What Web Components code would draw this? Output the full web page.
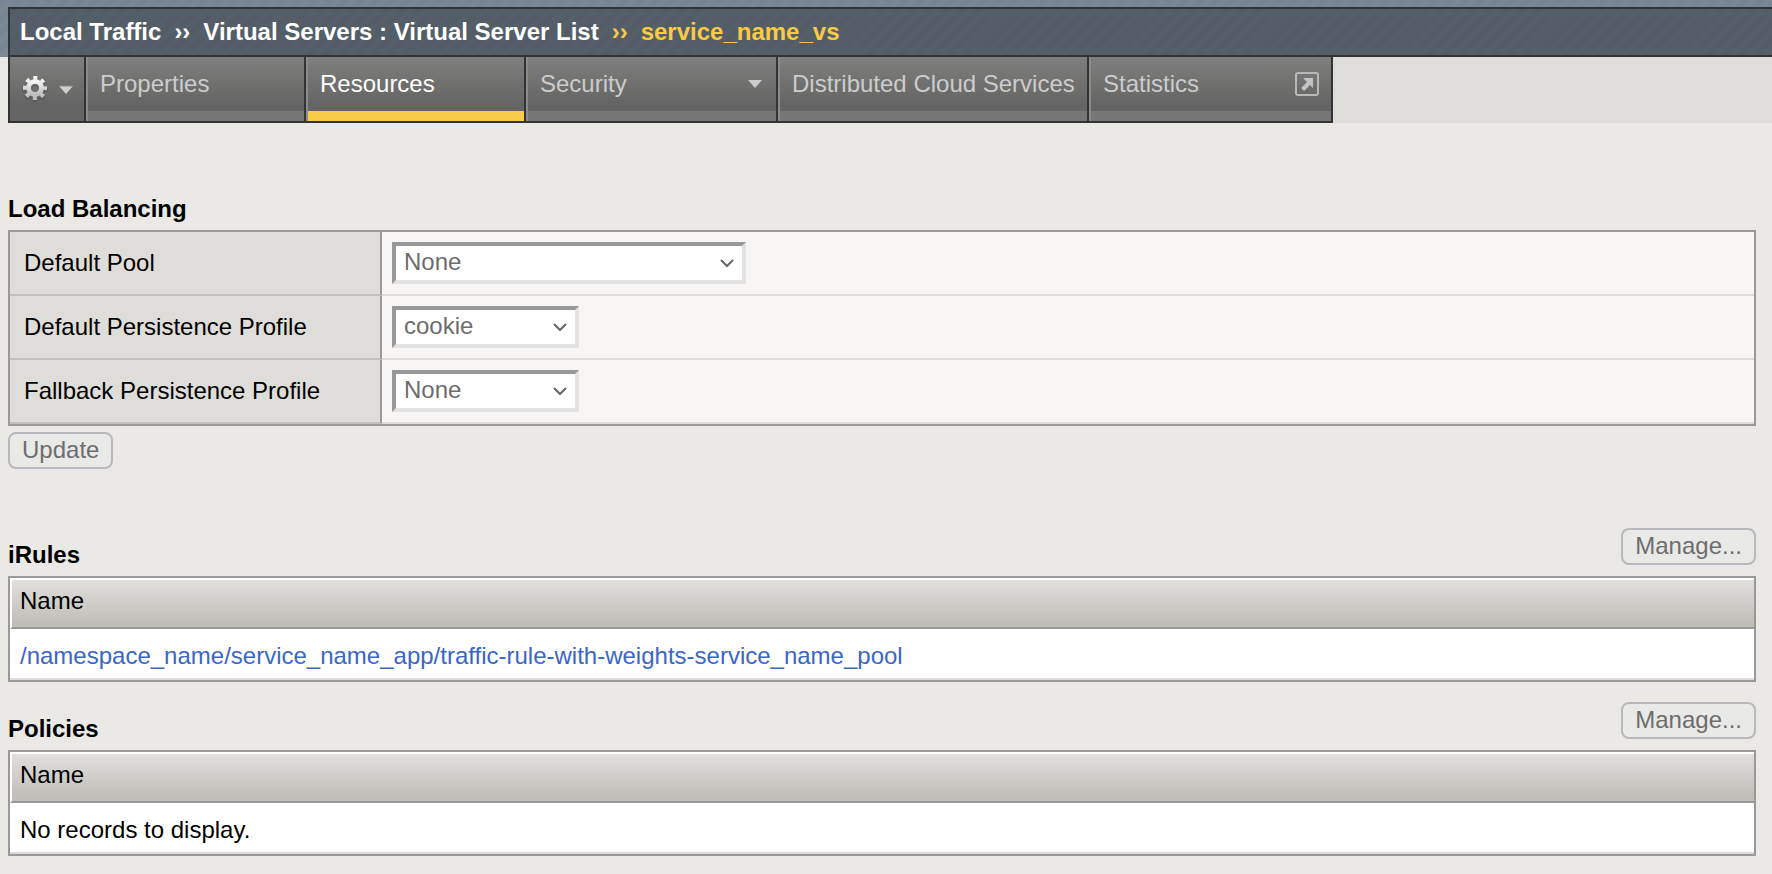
<!DOCTYPE html>
<html lang="en">
<head>
<meta charset="utf-8">
<title>Virtual Server List : service_name_vs</title>
<style>
  :root {
    --ink: #333335;
    --line: #999;
    --panel: #dfddd9;
    --accent: #f8cb46;
  }
  body {
    margin: 0;
    background: #eae9e5;
    color: #000;
    font: 24px/28px "Liberation Sans", Arial, Helvetica, sans-serif;
  }
</style>
</head>
<body>
<app-page>
  <crumb-bar slot="top">
    <crumb-item>Local Traffic</crumb-item>
    <crumb-item>Virtual Servers : Virtual Server List</crumb-item>
    <crumb-item current>service_name_vs</crumb-item>
  </crumb-bar>
  <tab-strip slot="tabs">
    <tab-menu></tab-menu>
    <nav-tab>Properties</nav-tab>
    <nav-tab active>Resources</nav-tab>
    <nav-tab size="medium" icon="arrow">Security</nav-tab>
    <nav-tab size="large">Distributed Cloud Services</nav-tab>
    <nav-tab size="medium" icon="popup">Statistics</nav-tab>
  </tab-strip>
  <load-balancing></load-balancing>
  <record-list heading="iRules"><a href="#rule">/namespace_name/service_name_app/traffic-rule-with-weights-service_name_pool</a></record-list>
  <record-list heading="Policies">No records to display.</record-list>
</app-page>

<script>
const define = (name, html, setup) => {
  const template = document.createElement('template');
  template.innerHTML = html;
  customElements.define(name, class extends HTMLElement {
    constructor() {
      super();
      this.attachShadow({ mode: 'open' }).append(template.content.cloneNode(true));
    }
    connectedCallback() {
      if (setup) setup(this, this.shadowRoot);
    }
  });
};

define('app-page', `
  <style>
    :host { display: block; }
    header {
      padding: 7px 0 0 8px;
      background: repeating-linear-gradient(135deg, #778595 0 5px, #7b8997 6px 10px, #778595 11px);
    }
    nav { padding-left: 8px; background: linear-gradient(90deg, #eae9e5 8px, var(--panel) 8px); }
    main { display: block; padding: 72px 16px 16px 8px; }
  </style>
  <header><slot name="top"></slot></header>
  <nav><slot name="tabs"></slot></nav>
  <main><slot></slot></main>
`);

define('crumb-bar', `
  <style>
    :host {
      display: flex;
      height: 46px;
      align-items: center;
      padding-left: 10px;
      border: solid var(--ink);
      border-width: 2px 0 2px 2px;
      color: #fff;
      font-weight: bold;
      background: repeating-linear-gradient(135deg, #535d66 0 5px, #555f69 6px 10px, #535d66 11px);
      white-space: nowrap;
    }
  </style>
  <slot></slot>
`);

define('crumb-item', `
  <style>
    :host { display: flex; }
    :host([current]) { color: var(--accent); }
    .mark { margin: 0 13px; }
    :host(:first-child) .mark { display: none; }
    a { color: inherit; text-decoration: none; }
  </style>
  <span class="mark">››</span><a href="#crumb"><slot></slot></a>
`);

define('tab-strip', `
  <style>
    :host {
      display: flex;
      width: max-content;
      border-left: 2px solid var(--ink);
      --tab: linear-gradient(#7f7f7f, #6f6f6d 45%, #646464 75%);
    }
  </style>
  <slot></slot>
`);

define('tab-menu', `
  <style>
    :host { display: block; border: solid var(--ink); border-width: 0 2px 2px 0; background: var(--tab); }
    button {
      display: flex; gap: 11px; align-items: center;
      width: 74px; height: 64px; padding: 0 0 0 12px;
      border: 0; background: none;
    }
    svg { display: block; flex: none; }
  </style>
  <button type="button" aria-label="Options">
    <svg width="26" height="26" viewBox="0 0 26 26">
      <defs><linearGradient id="g" x1="0" y1="0" x2="0" y2="1"><stop offset="0" stop-color="#f4f4f4"/><stop offset="1" stop-color="#bdbdbd"/></linearGradient></defs>
      <g fill="none" stroke="#555" stroke-opacity=".5">
        <circle cx="13" cy="14" r="7" stroke-width="7"/>
        <circle cx="13" cy="14" r="11" stroke-width="4" stroke-dasharray="4.2 4.44" stroke-dashoffset="2.1"/>
      </g>
      <g fill="none" stroke="url(#g)">
        <circle cx="13" cy="12" r="6.5" stroke-width="5"/>
        <circle cx="13" cy="12" r="10" stroke-width="4" stroke-dasharray="4 3.854" stroke-dashoffset="2"/>
      </g>
    </svg>
    <svg width="14" height="14" viewBox="0 0 14 14"><path d="M0 4h14l-7 8z" fill="#d0d0d0"/><path d="M0 4h14" stroke="#888"/></svg>
  </button>
`);

define('nav-tab', `
  <style>
    :host { display: block; border: solid var(--ink); border-width: 0 2px 2px 0; background: var(--tab); color: #ccc; }
    a {
      display: flex; justify-content: space-between;
      box-sizing: border-box; width: 218px; height: 64px;
      padding: 13px 12px 0 12px;
      border-left: 2px solid #8b8b8b; 
      box-shadow: inset 0 -10px #777;
      color: inherit; text-decoration: none; white-space: nowrap;
    }
    :host([size=medium]) a { width: 250px; }
    :host([size=medium][icon=popup]) a { width: 242px; }
    :host([size=large]) a { width: 309px; }
    :host([active]) { color: #fff; }
    :host([active]) a { box-shadow: inset 0 -10px var(--accent); }
    svg { display: none; width: 24px; height: 28px; }
    :host([icon=arrow]) .arrow, :host([icon=popup]) .popup { display: block; }
    :host([icon=arrow]) a { padding-right: 9px; }
  </style>
  <a href="#tab"><slot></slot>
    <svg class="arrow" viewBox="0 0 24 28"><path d="M5 10h14l-7 8z" fill="#ccc"/></svg>
    <svg class="popup" viewBox="0 0 24 28"><rect x="1" y="3" width="22" height="22" rx="2" fill="none" stroke="#b8b8b8" stroke-width="2"/><path d="M8 8h10v10l-3-3-6 6-3-3 6-6z" fill="#c4c4c4"/></svg>
  </a>
`);

define('load-balancing', `
  <style>
    :host { display: block; }
    h2 { margin: 0 0 7px; font-size: 24px; line-height: 28px; }
    table { width: 100%; box-sizing: border-box; border-collapse: separate; border-spacing: 0; border: 2px solid var(--line); }
    th, td { height: 42px; padding: 10px; border-bottom: 2px solid #dddcda; }
    th { box-sizing: content-box; width: 344px; padding: 10px 12px 10px 14px; border-right: 2px solid var(--line); border-bottom-color: #c2c1bd; background: var(--panel); font-weight: normal; text-align: left; }
    td { background: #f7f6f5; }
    .pick { display: grid; width: 187px; height: 42px; }
    .pick.wide { width: 354px; }
    .pick > * { grid-area: 1 / 1; }
    select {
      appearance: none; box-sizing: border-box; width: 100%; height: 42px; margin: 0;
      padding: 0 32px 2px 8px; border: 4px solid; border-color: #999 #e3e3e3 #e3e3e3 #999; border-radius: 0;
      background: #fff; color: #6d6d6d; font: inherit; opacity: 1;
    }
    svg { place-self: center end; margin-right: 11px; pointer-events: none; }
    button {
      display: block; box-sizing: border-box; height: 37px; margin: 6px 0 0; padding: 0 12px 2px;
      border: 2px solid #b9b9bd; border-radius: 8px; background: #e9e9e8; color: #6d6d6d; font: inherit;
    }
  </style>
  <h2>Load Balancing</h2>
  <table>
    <tr><th scope="row"><label for="pool">Default Pool</label></th>
      <td><div class="pick wide"><select id="pool" disabled><option>None</option></select><svg width="16" height="12" viewBox="0 0 16 12"><path d="M2 3l6 6 6-6" fill="none" stroke="#666" stroke-width="2"/></svg></div></td></tr>
    <tr><th scope="row"><label for="main">Default Persistence Profile</label></th>
      <td><div class="pick"><select id="main" disabled><option>cookie</option></select><svg width="16" height="12" viewBox="0 0 16 12"><path d="M2 3l6 6 6-6" fill="none" stroke="#666" stroke-width="2"/></svg></div></td></tr>
    <tr><th scope="row"><label for="fallback">Fallback Persistence Profile</label></th>
      <td><div class="pick"><select id="fallback" disabled><option>None</option></select><svg width="16" height="12" viewBox="0 0 16 12"><path d="M2 3l6 6 6-6" fill="none" stroke="#666" stroke-width="2"/></svg></div></td></tr>
  </table>
  <button type="button" disabled>Update</button>
`);

define('record-list', `
  <style>
    :host { display: block; margin-top: 20px; }
    :host(:nth-of-type(1)) { margin-top: 59px; }
    header { display: flex; justify-content: space-between; align-items: flex-start; height: 48px; }
    h2 { margin: 13px 0 0; font-size: 24px; line-height: 28px; }
    button {
      box-sizing: border-box; height: 37px; margin: 0; padding: 0 12px 2px;
      border: 2px solid #b9b9bd; border-radius: 8px; background: #e9e9e8; color: #6d6d6d; font: inherit;
    }
    table { width: 100%; box-sizing: border-box; border-collapse: separate; border-spacing: 0; border: 2px solid var(--line); background: #fff; }
    th, td { text-align: left; }
    th {
      box-sizing: border-box; height: 51px; padding: 0 8px 6px; border: solid #fff; border-width: 2px 0 0 2px;
      background: linear-gradient(#e0dfdc, #c1bfba 90%) padding-box; font-weight: normal;
    }
    thead th { border-bottom: 2px solid var(--line); }
    td { box-sizing: border-box; height: 51px; padding: 4px 10px 0; border-bottom: 2px solid #dddcda; }
    ::slotted(a) { color: #3b67c4; text-decoration: none; }
  </style>
  <header><h2></h2><button type="button" disabled>Manage...</button></header>
  <table>
    <thead><tr><th scope="col">Name</th></tr></thead>
    <tbody><tr><td><slot></slot></td></tr></tbody>
  </table>
`, (host, root) => { root.querySelector('h2').textContent = host.getAttribute('heading'); });
</script>
</body>
</html>
